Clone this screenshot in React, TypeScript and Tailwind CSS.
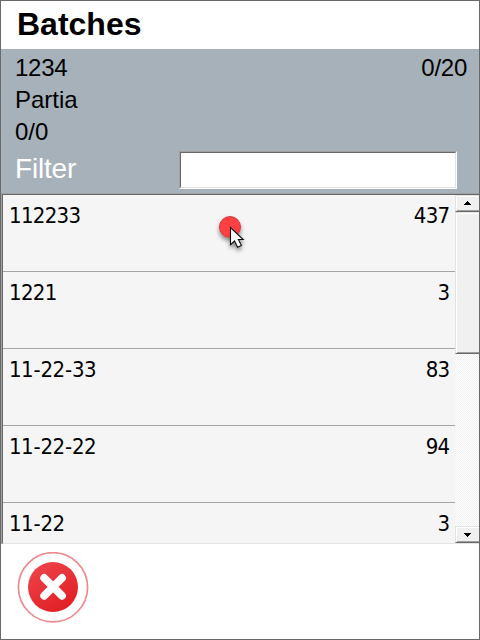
import { Fragment } from 'react';

const rows = [
  ['112233', '437'],
  ['1221', '3'],
  ['11-22-33', '83'],
  ['11-22-22', '94'],
  ['11-22', '3'],
];

const bevel =
  'border-t border-l border-t-[#e3e3e3] border-l-[#e3e3e3] border-b border-b-[#696969] shadow-[inset_1px_1px_0_#fff,inset_0_-1px_0_#a0a0a0] bg-[#f0f0f0] shrink-0';

function ScrollBar() {
  return (
    <div className="w-6 shrink-0 flex flex-col bg-[#f8f8f8] bg-[repeating-conic-gradient(#fff_0_25%,#f0f0f0_0_50%)] bg-[length:2px_2px]">
      <div className={`${bevel} h-[17px] flex justify-center pt-[5px]`}>
        <svg width="7" height="4" shapeRendering="crispEdges" aria-hidden="true">
          <path d="M3 0h1v1h1v1h1v1h1v1H0V3h1V2h1V1h1z" />
        </svg>
      </div>
      <div className={`${bevel} h-[142px]`} />
      <div className="flex-1" />
      <div className={`${bevel} h-[17px] flex justify-center pt-[6px]`}>
        <svg width="7" height="4" shapeRendering="crispEdges" aria-hidden="true">
          <path d="M0 0h7v1H6v1H5v1H4v1H3V3H2V2H1V1H0z" />
        </svg>
      </div>
    </div>
  );
}

function Pointer() {
  return (
    <svg className="absolute left-[213px] top-[17px]" width="40" height="45" aria-hidden="true">
      <defs>
        <filter id="soft" x="-50%" y="-50%" width="200%" height="200%">
          <feDropShadow dx="0" dy="3" stdDeviation="2" floodColor="#000" floodOpacity="0.45" />
        </filter>
      </defs>
      <g filter="url(#soft)">
        <circle cx="15" cy="16" r="10.5" fill="#fe4143" stroke="#d13b40" />
        <path
          d="M15.5 16.5v17.2l4-3.7 3.1 6.3 3.8-1.8-3-6h4.8z"
          fill="#fff"
          stroke="#111"
          strokeWidth="1.1"
        />
      </g>
    </svg>
  );
}

function BatchCode({ code }: { code: string }) {
  return (
    <span>
      {code.split('-').map((part, i) => (
        <Fragment key={i}>
          {i > 0 && <span className="px-[0.65px]">-</span>}
          {part}
        </Fragment>
      ))}
    </span>
  );
}

export default function App() {
  return (
    <div className="w-[480px] h-[640px] border border-[#696969] bg-white flex flex-col overflow-hidden text-black font-['Liberation_Sans',Arial,sans-serif]">
      <h1 className="h-12 pl-[16px] pt-[4px] text-[32px] leading-[38px] font-bold">Batches</h1>
      <header className="h-36 bg-[#a7b1b9] pl-[14px] text-[24px] leading-8">
        <div className="flex justify-between pr-[12px] pt-[3px] tracking-[-0.25px]">
          <span>1234</span>
          <span>0/20</span>
        </div>
        <div>Partia</div>
        <div>0/0</div>
        <div className="flex justify-between pr-[22px] pt-[3px]">
          <label htmlFor="filter" className="text-[28px] leading-[36px] tracking-[-0.2px] text-white">
            Filter
          </label>
          <div className="w-[278px] h-[38px] border border-t-[#a0a0a0] border-l-[#a0a0a0] border-r-white border-b-white">
            <input
              id="filter"
              className="block w-full h-full bg-white border border-t-[#696969] border-l-[#696969] border-r-[#e3e3e3] border-b-[#e3e3e3] outline-none px-1"
            />
          </div>
        </div>
      </header>
      <main className="relative h-[351px] border-t border-l border-t-[#a0a0a0] border-l-[#a0a0a0]">
        <div className="h-full border-t border-l border-b border-t-[#696969] border-l-[#696969] border-b-[#e3e3e3] flex">
          <div className="flex-1 overflow-hidden bg-[#f5f5f5] font-['DejaVu_Sans_Condensed','DejaVu_Sans',sans-serif] [font-stretch:condensed] text-[22px] leading-[26px] tracking-[-0.7px]">
            {rows.map(([name, count]) => (
              <div
                key={name}
                className="h-[77px] flex justify-between items-start pt-[8px] pl-[6px] pr-[5.5px] border-b border-[#a5a5a5]"
              >
                <BatchCode code={name} />
                <span>{count}</span>
              </div>
            ))}
          </div>
          <ScrollBar />
        </div>
        <Pointer />
      </main>
      <footer className="pt-[8px] pl-[16px]">
        <button type="button" aria-label="Close" className="block">
          <svg width="72" height="72" viewBox="0 0 72 72">
            <defs>
              <linearGradient id="red" x1="0.2" y1="0" x2="0.8" y2="1">
                <stop offset="0" stopColor="#ef4449" />
                <stop offset="1" stopColor="#df1d23" />
              </linearGradient>
            </defs>
            <circle cx="36" cy="35.3" r="34.6" fill="#fff" stroke="#ed8b8e" strokeWidth="1.7" />
            <circle cx="36" cy="35" r="25" fill="url(#red)" />
            <path d="M27.2 26l17.8 17.8M45 26L27.2 43.8" stroke="#fff" strokeWidth="7.8" strokeLinecap="round" />
          </svg>
        </button>
      </footer>
    </div>
  );
}
